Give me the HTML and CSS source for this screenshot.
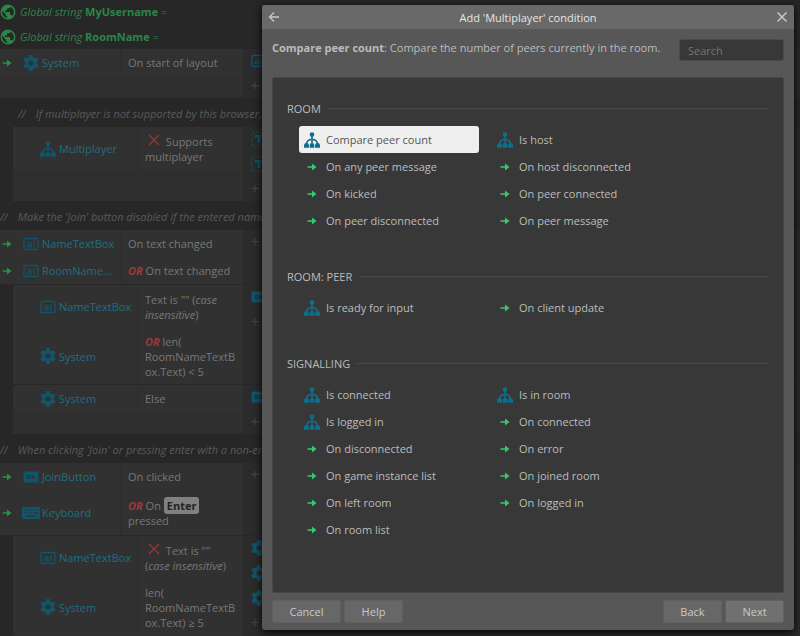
FILE: index.html
```html
<!DOCTYPE html>
<html lang="en">
<head>
<meta charset="utf-8">
<title>Add 'Multiplayer' condition</title>
<link rel="stylesheet" href="styles.css">
</head>
<body>
<svg class="defs" aria-hidden="true">
  <symbol id="tree" viewBox="0 0 16 16"><path d="M8 4v8M2.500 12.500Q2.500 7.800 8 7.300Q13.500 7.800 13.500 12.500" fill="none" stroke="currentColor" stroke-width="1.500"/><circle cx="8" cy="2.600" r="2.300"/><path d="M0 15.800v-2.600q0-2.200 2.500-2.200T5 13.200v2.600zM5.700 15.800v-2.600q0-2.200 2.300-2.200t2.300 2.200v2.600zM11 15.800v-2.600q0-2.200 2.500-2.200t2.500 2.200v2.600z"/></symbol>
  <symbol id="arrow" viewBox="0 0 10 10"><path d="M0.500 5h6" stroke="currentColor" stroke-width="1.500"/><path d="M5 1.500L9.500 5L5 8.500z"/></symbol>
  <symbol id="gear" viewBox="0 0 16 16"><path fill-rule="evenodd" d="M6.300 0h3.400l.5 2.400 1.300.8 2.400-.8 1.700 3-1.900 1.700v1.800l1.900 1.700-1.700 3-2.400-.8-1.300.8-.5 2.400H6.300l-.5-2.400-1.300-.8-2.400.8-1.700-3 1.900-1.700V7.100L.4 5.400l1.700-3 2.400.8 1.300-.8zM8 5.400a2.600 2.600 0 1 0 0 5.200a2.600 2.600 0 1 0 0-5.200z"/></symbol>
  <symbol id="box" viewBox="0 0 16 14"><rect x="1" y="1.500" width="14" height="11" rx="1" fill="none" stroke="currentColor" stroke-width="1.300"/><path d="M4.500 5.500h2.500q1 0 1 1V10H5.300q-1 0-1-1t1-1.200H8M11 4v6.500" fill="none" stroke="currentColor" stroke-width="1.200"/></symbol>
  <symbol id="ok" viewBox="0 0 16 12"><path fill-rule="evenodd" d="M1.500 0.500h13q1 0 1 1v9q0 1-1 1h-13q-1 0-1-1v-9q0-1 1-1zM4 4v4h3V4zM5 5h1v2H5zM8.500 4v4h1V6.700L11 8h1.300L10.200 6l2.100-2H11L9.500 5.300V4z"/></symbol>
  <symbol id="keys" viewBox="0 0 18 12"><path fill-rule="evenodd" d="M1 0h16q1 0 1 1v10q0 1-1 1H1q-1 0-1-1V1q0-1 1-1zM2.500 2.500v1.200h1.200V2.500zm3 0v1.200h1.200V2.500zm3 0v1.200h1.200V2.500zm3 0v1.200h1.200V2.500zm3 0v1.200h1.200V2.500zM2.500 5.300v1.200h2V5.300zm3.500 0v1.200h1.200V5.300zm3 0v1.200h1.200V5.300zm3 0v1.200h3.700V5.300zM4 8.500v1.200h10V8.500z"/></symbol>
  <symbol id="t" viewBox="0 0 16 16"><rect x="1" y="1" width="14" height="14" fill="none" stroke="currentColor" stroke-dasharray="2 1.500"/><path d="M4 4h8v2.500H9.300V12H6.700V6.500H4z"/></symbol>
  <symbol id="globe" viewBox="0 0 16 16"><path fill-rule="evenodd" d="M8 .5a7.500 7.500 0 1 0 0 15a7.500 7.500 0 1 0 0-15zM7.200 13.900A6 6 0 0 1 2.200 6.700L5.700 10.200v.8q0 1.500 1.500 1.500zM12.400 12q-.3-1-1.400-1h-.8V8.800q0-.8-.8-.8H5V6.500h1.400q.8 0 .8-.8V4.200h1.500q1.500 0 1.500-1.500v-.3A6 6 0 0 1 12.400 12z"/></symbol>
  <symbol id="no" viewBox="0 0 12 12"><path d="M1 1l10 10M11 1L1 11" stroke="currentColor" stroke-width="1.400"/></symbol>
</svg>

<main class="sheet">
  <p class="global"><svg class="i16"><use href="#globe"/></svg><span><i>Global string</i> <b>MyUsername</b> =</span></p>
  <p class="global"><svg class="i16"><use href="#globe"/></svg><span><i>Global string</i> <b>RoomName</b> =</span></p>

  <section class="event">
    <div class="conds">
      <div class="cond"><div class="obj"><svg class="trig"><use href="#arrow"/></svg><svg class="i16"><use href="#gear"/></svg><span>System</span></div><div class="what">On start of layout</div></div>
      <div class="rest"></div>
    </div>
    <div class="acts"><svg class="i16"><use href="#box"/></svg><span>+</span></div>
  </section>

  <p class="note inner"><span>//</span>If multiplayer is not supported by this browser, show a message</p>
  <section class="event sub">
    <div class="conds">
      <div class="cond two"><div class="obj"><svg class="i16"><use href="#tree"/></svg><span>Multiplayer</span></div><div class="what"><span><svg class="no"><use href="#no"/></svg> Supports multiplayer</span></div></div>
      <div class="rest tall"></div>
    </div>
    <div class="acts"><svg class="i16"><use href="#t"/></svg><svg class="i16"><use href="#t"/></svg><span>+</span></div>
  </section>

  <p class="note"><span>//</span>Make the 'Join' button disabled if the entered name is too short</p>
  <section class="event">
    <div class="conds">
      <div class="cond"><div class="obj"><svg class="trig"><use href="#arrow"/></svg><svg class="i16"><use href="#box"/></svg><span>NameTextBox</span></div><div class="what">On text changed</div></div>
      <div class="cond"><div class="obj"><svg class="trig"><use href="#arrow"/></svg><svg class="i16"><use href="#box"/></svg><span>RoomName...</span></div><div class="what"><span><b class="or">OR</b> On text changed</span></div></div>
    </div>
    <div class="acts"><span>+</span></div>
  </section>
  <section class="event sub">
    <div class="conds">
      <div class="cond two"><div class="obj"><svg class="i16"><use href="#box"/></svg><span>NameTextBox</span></div><div class="what"><span>Text is "" (<i>case insensitive</i>)</span></div></div>
      <div class="cond three"><div class="obj"><svg class="i16"><use href="#gear"/></svg><span>System</span></div><div class="what"><span><b class="or">OR</b> len(<br>RoomNameTextBox.Text) &lt; 5</span></div></div>
    </div>
    <div class="acts"><svg class="i16"><use href="#ok"/></svg><span>+</span></div>
  </section>
  <section class="event sub">
    <div class="conds">
      <div class="cond"><div class="obj"><svg class="i16"><use href="#gear"/></svg><span>System</span></div><div class="what">Else</div></div>
      <div class="rest"></div>
    </div>
    <div class="acts"><svg class="i16"><use href="#ok"/></svg><span>+</span></div>
  </section>

  <p class="note"><span>//</span>When clicking 'Join' or pressing enter with a non-empty name</p>
  <section class="event">
    <div class="conds">
      <div class="cond"><div class="obj"><svg class="trig"><use href="#arrow"/></svg><svg class="i16"><use href="#ok"/></svg><span>JoinButton</span></div><div class="what">On clicked</div></div>
      <div class="cond keyed"><div class="obj"><svg class="trig"><use href="#arrow"/></svg><svg class="i16 wide"><use href="#keys"/></svg><span>Keyboard</span></div><div class="what"><span><b class="or">OR</b> On <kbd>Enter</kbd> pressed</span></div></div>
    </div>
    <div class="acts"><span>+</span></div>
  </section>
  <section class="event sub">
    <div class="conds">
      <div class="cond two"><div class="obj"><svg class="i16"><use href="#box"/></svg><span>NameTextBox</span></div><div class="what"><span><svg class="no"><use href="#no"/></svg> Text is "" (<i>case insensitive</i>)</span></div></div>
      <div class="cond three"><div class="obj"><svg class="i16"><use href="#gear"/></svg><span>System</span></div><div class="what"><span>len(<br>RoomNameTextBox.Text) ≥ 5</span></div></div>
      <div class="rest"></div>
    </div>
    <div class="acts"><svg class="i16"><use href="#gear"/></svg><svg class="i16"><use href="#gear"/></svg><svg class="i16"><use href="#gear"/></svg><span>+</span></div>
  </section>
</main>

<div class="dialog" role="dialog" aria-labelledby="title">
  <header class="bar">
    <button class="plain" aria-label="Previous"><svg viewBox="0 0 12 12"><path d="M11 6H1.500M6 1.500L1.500 6L6 10.500" fill="none" stroke="currentColor" stroke-width="1.300"/></svg></button>
    <h1 id="title">Add 'Multiplayer' condition</h1>
    <button class="plain" aria-label="Close"><svg viewBox="0 0 12 12"><path d="M1.500 1.500l9 9M10.500 1.500l-9 9" stroke="currentColor" stroke-width="1.500"/></svg></button>
  </header>
  <div class="intro">
    <p><b>Compare peer count</b>: Compare the number of peers currently in the room.</p>
    <input type="search" placeholder="Search" aria-label="Search">
  </div>
  <div class="panel">
    <section>
      <h2>ROOM</h2>
      <ul>
        <li class="on"><svg class="i16"><use href="#tree"/></svg>Compare peer count</li>
        <li><svg class="i16"><use href="#tree"/></svg>Is host</li>
        <li><svg class="trig"><use href="#arrow"/></svg>On any peer message</li>
        <li><svg class="trig"><use href="#arrow"/></svg>On host disconnected</li>
        <li><svg class="trig"><use href="#arrow"/></svg>On kicked</li>
        <li><svg class="trig"><use href="#arrow"/></svg>On peer connected</li>
        <li><svg class="trig"><use href="#arrow"/></svg>On peer disconnected</li>
        <li><svg class="trig"><use href="#arrow"/></svg>On peer message</li>
      </ul>
    </section>
    <section>
      <h2>ROOM: PEER</h2>
      <ul>
        <li><svg class="i16"><use href="#tree"/></svg>Is ready for input</li>
        <li><svg class="trig"><use href="#arrow"/></svg>On client update</li>
      </ul>
    </section>
    <section>
      <h2>SIGNALLING</h2>
      <ul>
        <li><svg class="i16"><use href="#tree"/></svg>Is connected</li>
        <li><svg class="i16"><use href="#tree"/></svg>Is in room</li>
        <li><svg class="i16"><use href="#tree"/></svg>Is logged in</li>
        <li><svg class="trig"><use href="#arrow"/></svg>On connected</li>
        <li><svg class="trig"><use href="#arrow"/></svg>On disconnected</li>
        <li><svg class="trig"><use href="#arrow"/></svg>On error</li>
        <li><svg class="trig"><use href="#arrow"/></svg>On game instance list</li>
        <li><svg class="trig"><use href="#arrow"/></svg>On joined room</li>
        <li><svg class="trig"><use href="#arrow"/></svg>On left room</li>
        <li><svg class="trig"><use href="#arrow"/></svg>On logged in</li>
        <li><svg class="trig"><use href="#arrow"/></svg>On room list</li>
      </ul>
    </section>
  </div>
  <footer>
    <button class="btn large">Cancel</button>
    <button class="btn">Help</button>
    <span class="space"></span>
    <button class="btn">Back</button>
    <button class="btn next">Next</button>
  </footer>
</div>
</body>
</html>
```
FILE: styles.css
```css
* { box-sizing: border-box; }
body, p, h1, h2, ul { margin: 0; padding: 0; }
body {
  height: 100vh;
  overflow: hidden;
  position: relative;
  background: #272727;
  color: #787878;
  font: 11px/15px "Open Sans", "Noto Sans", sans-serif;
}
button, input { font: inherit; color: inherit; border: 0; margin: 0; }
svg { flex: none; fill: currentColor; }
.defs { position: absolute; width: 0; height: 0; }
.i16 { width: 16px; height: 16px; }
.trig { width: 10px; height: 10px; color: #33cc66; }

/* Event sheet */
.sheet { height: calc(100% + 1px); margin-top: -1px; overflow: hidden; }
.global { display: flex; align-items: center; gap: 4px; height: 25px; color: #2b8547; }
.event { display: flex; margin-bottom: 1px; background: #2b2b2b; }
.sub { margin-left: 13px; border-radius: 2px; }
.conds { width: 243px; background: #313131; }
.sub .conds { width: 230px; }
.cond { display: flex; min-height: 27px; }
.two { min-height: 43px; }
.keyed { min-height: 45px; }
.three { min-height: 56px; }
.rest { height: 22px; background: #2f2f2f; }
.tall { height: 30px; }
.obj {
  display: flex;
  align-items: center;
  gap: 3px;
  width: 121px;
  padding-left: 2px;
  border-right: 1px solid #2d2d2d;
  color: #1d6e84;
}
.obj .i16 { color: #11556a; }
.obj .trig { margin-right: 8px; color: #27914a; }
.sub .obj { width: 125px; padding-left: 27px; }
.obj .wide { width: 18px; margin: 0 -1px; }
.what { flex: 1; display: flex; align-items: center; padding-left: 7px; overflow-wrap: anywhere; min-width: 0; padding-right: 8px; }
.no { width: 12px; height: 12px; margin: 0 3px; color: #943737; }
.or { color: #9c3a3a; font-style: italic; }
kbd { padding: 1px 3px; border-radius: 3px; background: #808080; color: #222; font: inherit; font-weight: bold; }
.acts { flex: 1; padding: 4px 8px; color: #11556a; }
.acts svg { display: block; margin-bottom: 9px; }
.acts span { color: #484848; font-size: 14px; }
.note { display: flex; gap: 10px; height: 28px; align-items: center; white-space: nowrap; color: #5a5a5a; font-style: italic; }
.inner { padding-left: 18px; }

/* Condition picker */
.dialog {
  position: absolute;
  inset: 5px 6px 6px 262px;
  display: flex;
  flex-direction: column;
  border-radius: 3px;
  background: #575757;
  color: #bcbcbc;
  box-shadow: 0 2px 8px #000;
}
.bar { display: flex; align-items: center; height: 24px; padding: 0 5px; border-radius: 3px 3px 0 0; background: #696969; }
.bar h1 { flex: 1; color: #e6e6e6; font-size: 11px; font-weight: normal; text-align: center; }
.plain { width: 14px; height: 14px; padding: 1px; background: none; color: #c6c6c6; }
.plain svg { display: block; width: 12px; height: 12px; }
.intro { display: flex; justify-content: space-between; height: 48px; padding: 10px 10px 0; }
.intro p { padding-top: 1px; }
.intro input { width: 105px; height: 22px; padding: 0 8px; border: 1px solid #4a4a4a; border-radius: 3px; background: #383838; }
.intro input::placeholder { color: #757575; }
.panel { flex: 1; margin: 0 10px; padding: 20px 14px; border: 1px solid #464646; border-radius: 3px; background: #383838; overflow: hidden; }
.panel section { margin-bottom: 32px; }
h2 { display: flex; align-items: center; gap: 7px; height: 20px; margin-bottom: 8px; font-size: 11px; font-weight: normal; }
h2::after { content: ""; flex: 1; height: 1px; background: #4d4d4d; }
ul { display: grid; grid-template-columns: 180px 180px; column-gap: 13px; padding-left: 12px; list-style: none; }
li { display: flex; align-items: center; gap: 6px; height: 27px; padding-left: 5px; border-radius: 3px; }
li .i16 { color: #0c6f8c; }
li .trig { margin: 0 3px; }
.on { background: #efefef; color: #555; }
footer { display: flex; gap: 3px; padding: 7px 10px; }
.space { flex: 1; }
.btn { width: 59px; height: 23px; border: 1px solid #606060; border-radius: 2px; background: #676767; color: #cacaca; }
.large { width: 69px; }
.next { background: #707070; }
```
